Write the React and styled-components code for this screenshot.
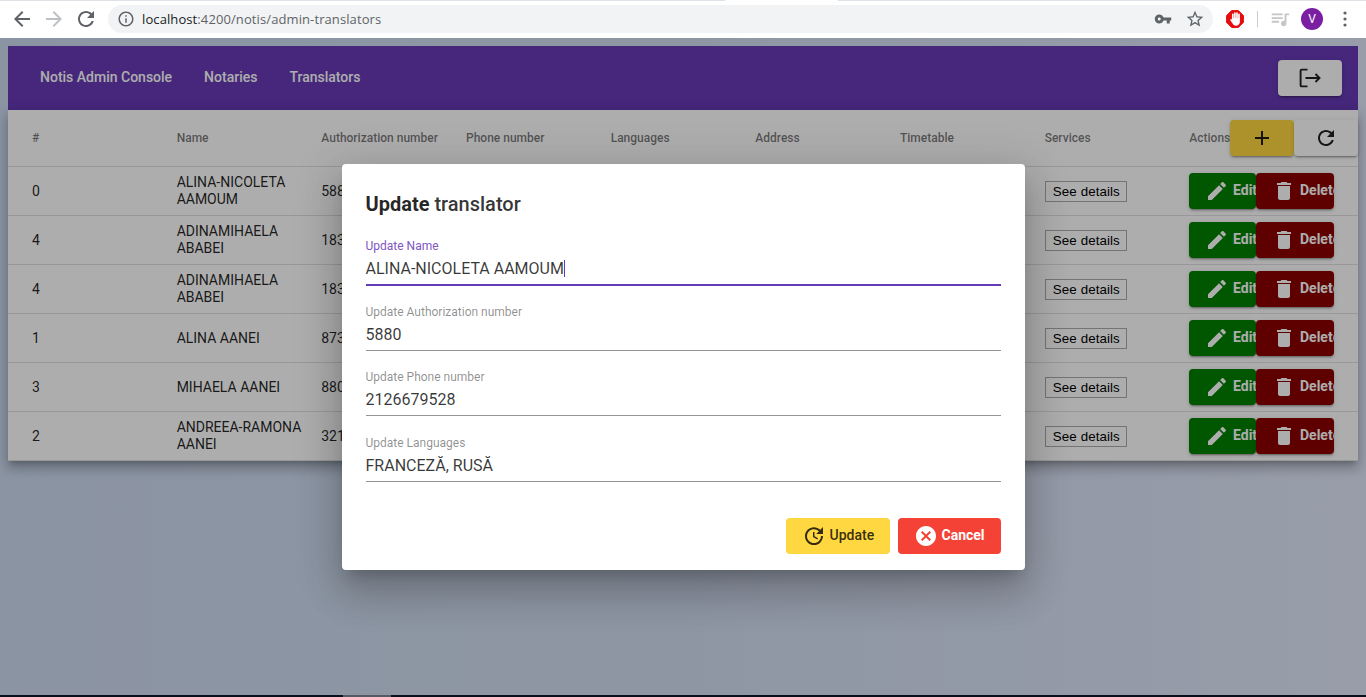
import React from "react";
import styled, { createGlobalStyle } from "styled-components";

const GlobalStyle = createGlobalStyle`
    html, body {
        margin: 0;
        height: 100%;
        overflow: hidden;
        font-family: Roboto, "Liberation Sans", sans-serif;
    }
    * {
        box-sizing: border-box;
    }
`;

const Screen = styled.div`
    height: 100vh;
    display: flex;
    flex-direction: column;
    position: relative;
`;

/* browser toolbar */
const BrowserBar = styled.div`
    height: 38px;
    flex: none;
    background: #fff;
    display: flex;
    align-items: center;
    position: relative;
    padding: 0 10px 0 10px;
`;

const TabStrip = styled.div`
    position: absolute;
    top: 0;
    left: 0;
    right: 0;
    height: 1px;
    background: linear-gradient(90deg, #dee1e6 725px, #fff 725px, #fff 838px, #dee1e6 838px);
`;

const NavIcon = styled.svg`
    width: 24px;
    height: 24px;
    flex: none;
    margin-right: 8px;
    fill: ${(p) => (p.$off ? "#bdc1c6" : "#5f6368")};
`;

const Omnibox = styled.div`
    width: 1105px;
    height: 28px;
    margin-left: 2px;
    border-radius: 14px;
    background: #f1f3f4;
    display: flex;
    align-items: center;
    padding: 0 8px 0 9px;
`;

const OmniIcon = styled.svg`
    width: 18px;
    height: 18px;
    flex: none;
    fill: #5f6368;
`;

const Url = styled.div`
    flex: 1;
    margin-left: 7px;
    font-family: "Open Sans", sans-serif;
    font-size: 13px;
    letter-spacing: 0.1px;
    color: #5f6368;
    span {
        color: #202124;
    }
`;

const KeyIcon = styled(OmniIcon)`
    margin-right: 13px;
`;

const StarIcon = styled(OmniIcon)`
    width: 20px;
    height: 20px;
`;

const Extensions = styled.div`
    display: flex;
    align-items: center;
    margin-left: 13px;
`;

const Divider = styled.div`
    width: 1px;
    height: 16px;
    background: #ccc;
    margin: 0 11px 0 13px;
`;

const QueueIcon = styled.svg`
    width: 22px;
    height: 22px;
    fill: #c6c6c6;
`;

const Avatar = styled.div`
    width: 22px;
    height: 22px;
    margin-left: 10px;
    border-radius: 50%;
    background: #7b1fa2;
    color: #fff;
    font-size: 12px;
    display: flex;
    align-items: center;
    justify-content: center;
`;

const MoreDots = styled.svg`
    width: 6px;
    height: 16px;
    margin-left: 19px;
    fill: #5f6368;
`;

/* page */
const Page = styled.div`
    flex: 1;
    padding: 8px;
    background: linear-gradient(90deg, #cddbf0 0%, #d2def2 50%, #e0e8fa 100%);
`;

const Navbar = styled.div`
    height: 64px;
    background: #673ab7;
    display: flex;
    align-items: center;
    padding: 0 16px;
`;

const NavLink = styled.div`
    padding: 0 16px 2px;
    color: #fff;
    font-size: 14px;
    font-weight: 500;
`;

const Spacer = styled.div`
    flex: 1;
`;

const RaisedButton = styled.button`
    height: 36px;
    width: ${(p) => p.$width || 64}px;
    flex: none;
    border: none;
    border-radius: 4px;
    padding: 0;
    background: ${(p) => p.$bg || "#fff"};
    color: ${(p) => p.$color || "rgba(0, 0, 0, 0.87)"};
    font-family: Roboto, sans-serif;
    font-size: 14px;
    font-weight: ${(p) => p.$weight || 500};
    display: flex;
    align-items: center;
    justify-content: center;
    box-shadow: 0 3px 1px -2px rgba(0, 0, 0, 0.2), 0 2px 2px 0 rgba(0, 0, 0, 0.14), 0 1px 5px 0 rgba(0, 0, 0, 0.12);
    svg {
        fill: currentColor;
    }
`;

const ButtonText = styled.span`
    margin-top: -2px;
`;

const LogoutButton = styled(RaisedButton)`
    svg {
        width: 24px;
        height: 24px;
        fill: none;
        stroke: rgba(0, 0, 0, 0.87);
        stroke-width: 1.9;
    }
`;

const TableCard = styled.div`
    position: relative;
    background: #fff;
    box-shadow: 0 5px 5px -3px rgba(0, 0, 0, 0.2), 0 8px 10px 1px rgba(0, 0, 0, 0.14), 0 3px 14px 2px rgba(0, 0, 0, 0.12);
`;

const TableTools = styled.div`
    position: absolute;
    top: 10px;
    right: 0;
    display: flex;
`;

const Row = styled.div`
    display: grid;
    grid-template-columns: repeat(9, 1fr);
    align-items: center;
    padding: 0 24px;
    height: ${(p) => (p.$head ? 57 : 49)}px;
    border-bottom: 1px solid rgba(0, 0, 0, 0.12);
`;

const HeadCell = styled.div`
    font-size: 12px;
    font-weight: 500;
    color: rgba(0, 0, 0, 0.54);
    padding-right: 16px;
    white-space: nowrap;
`;

const Cell = styled.div`
    font-size: 14px;
    line-height: 17px;
    color: rgba(0, 0, 0, 0.87);
    padding-right: 16px;
`;

const DetailsButton = styled.button`
    width: 82px;
    height: 21px;
    margin-left: 1px;
    padding: 0;
    border: 1px solid #acacac;
    border-radius: 0;
    background: transparent;
    color: #000;
    font-family: "Liberation Sans", Arial, sans-serif;
    font-size: 13.33px;
    letter-spacing: 0.1px;
`;

const ActionCell = styled.div`
    display: flex;
`;

const ActionButton = styled(RaisedButton)`
    justify-content: flex-start;
    padding-left: 16px;
    overflow: hidden;
    white-space: nowrap;
    font-weight: 700;
    color: #fff;
    position: relative;
    svg {
        width: 24px;
        height: 24px;
        flex: none;
        margin-right: 4px;
    }
`;

/* dialog */
const Backdrop = styled.div`
    position: absolute;
    top: 38px;
    left: 0;
    right: 0;
    bottom: 0;
    background: rgba(0, 0, 0, 0.32);
    display: flex;
    justify-content: center;
    align-items: center;
    padding-bottom: 1px;
`;

const Dialog = styled.div`
    width: 683px;
    padding: 24px 24px 16px;
    background: #fff;
    border-radius: 4px;
    box-shadow: 0 11px 15px -7px rgba(0, 0, 0, 0.2), 0 24px 38px 3px rgba(0, 0, 0, 0.14), 0 9px 46px 8px rgba(0, 0, 0, 0.12);
`;

const DialogTitle = styled.h2`
    margin: 0;
    height: 32.5px;
    font-size: 20px;
    line-height: 32px;
    font-weight: 500;
    color: rgba(0, 0, 0, 0.8);
    b {
        font-weight: 700;
        color: rgba(0, 0, 0, 0.87);
    }
`;

const Field = styled.div`
    height: 65.5px;
    display: flex;
    flex-direction: column;
    justify-content: flex-end;
    padding-bottom: 1px;
`;

const FieldLabel = styled.label`
    font-size: 12px;
    line-height: 14px;
    margin-bottom: 6px;
    color: ${(p) => (p.$active ? "#7e57c2" : "rgba(0, 0, 0, 0.45)")};
`;

const FieldValue = styled.div`
    font-size: 16px;
    line-height: 20px;
    height: 20px;
    box-sizing: content-box;
    padding-bottom: 5px;
    color: rgba(0, 0, 0, 0.78);
    border-bottom: ${(p) => (p.$active ? "2px solid #673ab7" : "1px solid rgba(0, 0, 0, 0.42)")};
    margin-bottom: ${(p) => (p.$active ? "-0.5px" : "0")};
`;

const Caret = styled.span`
    display: inline-block;
    width: 1px;
    height: 17px;
    background: #673ab7;
    vertical-align: -3px;
`;

const DialogActions = styled.div`
    display: flex;
    justify-content: flex-end;
    gap: 8px;
    margin-top: 35.5px;
`;

const DialogButton = styled(RaisedButton)`
    justify-content: flex-start;
    padding-left: 16px;
    box-shadow: none;
    svg {
        width: 24px;
        height: 24px;
        flex: none;
        margin-right: 4px;
    }
`;

const Taskbar = styled.div`
    position: absolute;
    left: 0;
    right: 0;
    bottom: 0;
    height: 2px;
    background: linear-gradient(90deg, #0a0f1c 343px, #565a63 343px, #565a63 391px, #0a0f1c 391px);
`;

const EDIT = "M3 17.25V21h3.75L17.81 9.94l-3.75-3.75L3 17.25zM20.71 7.04c.39-.39.39-1.02 0-1.41l-2.34-2.34c-.39-.39-1.02-.39-1.41 0l-1.83 1.83 3.75 3.75 1.83-1.83z";
const DELETE = "M6 19c0 1.1.9 2 2 2h8c1.1 0 2-.9 2-2V7H6v12zM19 4h-3.5l-1-1h-5l-1 1H5v2h14V4z";
const REFRESH = "M17.65 6.35C16.2 4.9 14.21 4 12 4c-4.42 0-7.99 3.58-7.99 8s3.57 8 7.99 8c3.73 0 6.84-2.55 7.73-6h-2.08c-.82 2.33-3.04 4-5.65 4-3.31 0-6-2.69-6-6s2.69-6 6-6c1.66 0 3.14.69 4.22 1.78L13 11h7V4l-2.35 2.35z";

const Glyph = ({ d }) => (
    <svg viewBox="0 0 24 24" width="24" height="24"><path d={d} /></svg>
);

const columns = ["#", "Name", "Authorization number", "Phone number", "Languages", "Address", "Timetable", "Services", "Actions"];

const translators = [
    { id: 0, name: "ALINA-NICOLETA AAMOUM", auth: "5880" },
    { id: 4, name: "ADINAMIHAELA ABABEI", auth: "1832" },
    { id: 4, name: "ADINAMIHAELA ABABEI", auth: "1832" },
    { id: 1, name: "ALINA AANEI", auth: "8731" },
    { id: 3, name: "MIHAELA AANEI", auth: "8804" },
    { id: 2, name: "ANDREEA-RAMONA AANEI", auth: "3215" },
];

const App = () => {
    return (
        <Screen>
            <GlobalStyle />
            <BrowserBar>
                <TabStrip />
                <NavIcon viewBox="0 0 24 24"><path d="M20 11H7.83l5.59-5.59L12 4l-8 8 8 8 1.41-1.41L7.83 13H20v-2z" /></NavIcon>
                <NavIcon viewBox="0 0 24 24" $off><path d="M12 4l-1.41 1.41L16.17 11H4v2h12.17l-5.58 5.59L12 20l8-8z" /></NavIcon>
                <NavIcon viewBox="0 0 24 24"><path d={REFRESH} /></NavIcon>
                <Omnibox>
                    <OmniIcon viewBox="0 0 24 24"><path d="M11 7h2v2h-2zm0 4h2v6h-2zm1-9C6.48 2 2 6.48 2 12s4.48 10 10 10 10-4.48 10-10S17.52 2 12 2zm0 18c-4.41 0-8-3.59-8-8s3.59-8 8-8 8 3.59 8 8-3.59 8-8 8z" /></OmniIcon>
                    <Url><span>localhost</span>:4200/notis/admin-translators</Url>
                    <KeyIcon viewBox="0 0 24 24"><path d="M12.65 10C11.83 7.67 9.61 6 7 6c-3.31 0-6 2.69-6 6s2.69 6 6 6c2.61 0 4.83-1.67 5.65-4H17v4h4v-4h2v-4H12.65zM7 14c-1.1 0-2-.9-2-2s.9-2 2-2 2 .9 2 2-.9 2-2 2z" /></KeyIcon>
                    <StarIcon viewBox="0 0 24 24"><path d="M22 9.24l-7.19-.62L12 2 9.19 8.63 2 9.24l5.46 4.73L5.82 21 12 17.27 18.18 21l-1.63-7.03L22 9.24zM12 15.4l-3.76 2.27 1-4.28-3.32-2.88 4.38-.38L12 6.1l1.71 4.04 4.38.38-3.32 2.88 1 4.28L12 15.4z" /></StarIcon>
                </Omnibox>
                <Extensions>
                    <svg viewBox="0 0 18 18" width="18" height="18">
                        <polygon points="5.6,0.6 12.4,0.6 17.4,5.6 17.4,12.4 12.4,17.4 5.6,17.4 0.6,12.4 0.6,5.6" fill="#e50d0d" stroke="#e50d0d" strokeLinejoin="round" />
                        <path d="M6.8 9V4.4M8.9 9V3.2M11 9V3.2M13 9V4.4" stroke="#fff" strokeWidth="1.7" strokeLinecap="round" fill="none" />
                        <path d="M5.9 8.2h8v3.6c0 2.4-1.5 3.9-3.8 3.9-1.7 0-2.7-.8-3.4-2L4.3 10.3c-.4-.9.7-1.6 1.6-.8z" fill="#fff" />
                    </svg>
                    <Divider />
                    <QueueIcon viewBox="0 0 24 24"><path d="M15 6H3v2h12V6zm0 4H3v2h12v-2zM3 16h8v-2H3v2zM17 6v8.18c-.31-.11-.65-.18-1-.18-1.66 0-3 1.34-3 3s1.34 3 3 3 3-1.34 3-3V8h3V6h-5z" /></QueueIcon>
                    <Avatar>V</Avatar>
                    <MoreDots viewBox="0 0 6 16">
                        <circle cx="3" cy="2" r="1.6" />
                        <circle cx="3" cy="8" r="1.6" />
                        <circle cx="3" cy="14" r="1.6" />
                    </MoreDots>
                </Extensions>
            </BrowserBar>

            <Page>
                <Navbar>
                    <NavLink>Notis Admin Console</NavLink>
                    <NavLink>Notaries</NavLink>
                    <NavLink>Translators</NavLink>
                    <Spacer />
                    <LogoutButton>
                        <svg viewBox="0 0 24 24">
                            <path d="M9.5 3.6H3.6a1 1 0 0 0-1 1v14.8a1 1 0 0 0 1 1h5.9" />
                            <path d="M7.5 12h14M17.5 8l4 4-4 4" />
                        </svg>
                    </LogoutButton>
                </Navbar>
                <TableCard>
                    <TableTools>
                        <RaisedButton $bg="#ffd740"><Glyph d="M19 13h-6v6h-2v-6H5v-2h6V5h2v6h6v2z" /></RaisedButton>
                        <RaisedButton><Glyph d={REFRESH} /></RaisedButton>
                    </TableTools>
                    <Row $head>
                        {columns.map((c) => <HeadCell key={c}>{c}</HeadCell>)}
                    </Row>
                    {translators.map((t, i) => (
                        <Row key={i}>
                            <Cell>{t.id}</Cell>
                            <Cell>{t.name}</Cell>
                            <Cell>{t.auth}</Cell>
                            <Cell />
                            <Cell />
                            <Cell />
                            <Cell />
                            <Cell><DetailsButton>See details</DetailsButton></Cell>
                            <ActionCell>
                                <ActionButton $bg="green" $width={67}><Glyph d={EDIT} /><ButtonText>Edit</ButtonText></ActionButton>
                                <ActionButton $bg="darkred" $width={78}><Glyph d={DELETE} /><ButtonText>Delete</ButtonText></ActionButton>
                            </ActionCell>
                        </Row>
                    ))}
                </TableCard>
            </Page>

            <Backdrop>
                <Dialog>
                    <DialogTitle><b>Update</b> translator</DialogTitle>
                    <Field>
                        <FieldLabel $active>Update Name</FieldLabel>
                        <FieldValue $active>ALINA-NICOLETA AAMOUM<Caret /></FieldValue>
                    </Field>
                    <Field>
                        <FieldLabel>Update Authorization number</FieldLabel>
                        <FieldValue>5880</FieldValue>
                    </Field>
                    <Field>
                        <FieldLabel>Update Phone number</FieldLabel>
                        <FieldValue>2126679528</FieldValue>
                    </Field>
                    <Field>
                        <FieldLabel>Update Languages</FieldLabel>
                        <FieldValue>FRANCEZĂ, RUSĂ</FieldValue>
                    </Field>
                    <DialogActions>
                        <DialogButton $bg="#ffd740" $color="rgba(0, 0, 0, 0.8)" $width={104}>
                            <Glyph d="M21 10.12h-6.78l2.74-2.82c-2.73-2.7-7.15-2.8-9.88-.1-2.73 2.71-2.73 7.08 0 9.79s7.15 2.71 9.88 0C18.32 15.65 19 14.08 19 12.1h2c0 1.98-.88 4.55-2.64 6.29-3.51 3.48-9.21 3.48-12.72 0-3.5-3.47-3.53-9.11-.02-12.58s9.14-3.47 12.65 0L21 3v7.12zM12.5 8v4.25l3.5 2.08-.72 1.21L11 13V8h1.5z" />
                            <ButtonText>Update</ButtonText>
                        </DialogButton>
                        <DialogButton $bg="#f44336" $color="#fff" $weight={700} $width={103}>
                            <Glyph d="M12 2C6.47 2 2 6.47 2 12s4.47 10 10 10 10-4.47 10-10S17.53 2 12 2zm5 13.59L15.59 17 12 13.41 8.41 17 7 15.59 10.59 12 7 8.41 8.41 7 12 10.59 15.59 7 17 8.41 13.41 12 17 15.59z" />
                            <ButtonText>Cancel</ButtonText>
                        </DialogButton>
                    </DialogActions>
                </Dialog>
            </Backdrop>
            <Taskbar />
        </Screen>
    );
};

export default App;
